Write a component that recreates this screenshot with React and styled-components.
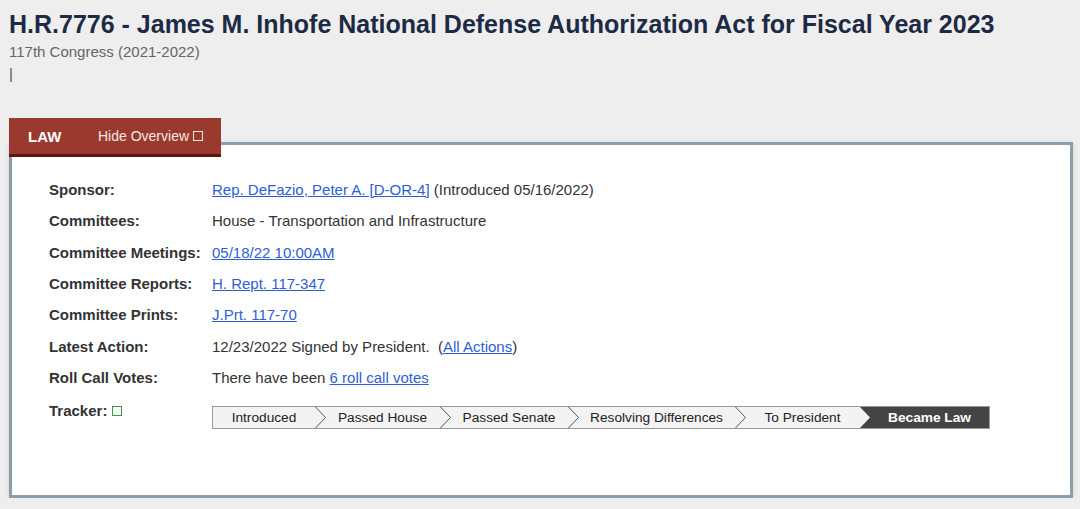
import React from "react";
import styled, { createGlobalStyle } from "styled-components";

const Global = createGlobalStyle`
  html, body { margin: 0; padding: 0; background: #eeeeee; }
  body { font-family: "Liberation Sans", Arial, Helvetica, sans-serif; color: #333; }
`;

const Page = styled.div`
  padding: 9px 8px 0 9px;
`;

const Title = styled.h1`
  margin: 0;
  font-size: 25px;
  line-height: 30px;
  font-weight: bold;
  color: #1d2a45;
`;

const Congress = styled.div`
  font-size: 15px;
  line-height: 18px;
  color: #666;
  margin-top: 4px;
`;

const Caret = styled.div`
  font-size: 15px;
  line-height: 16px;
  color: #555;
  margin-top: 5px;
`;

const Overview = styled.div`
  margin-top: 36px;
`;

const Tab = styled.div`
  position: relative;
  z-index: 2;
  display: flex;
  align-items: center;
  width: 212px;
  height: 39px;
  box-sizing: border-box;
  background: #9a3a2e;
  border-bottom: 3px solid #5c1610;
  color: #fff;
  font-size: 14px;
  margin-bottom: -15px;
`;

const TabLabel = styled.span`
  font-weight: bold;
  font-size: 15px;
  padding-left: 19px;
  width: 70px;
`;

const TabToggle = styled.span`
  display: flex;
  align-items: center;
  gap: 4px;
  color: #f4e6e3;
`;

const Square = styled.span`
  display: inline-block;
  width: 8px;
  height: 8px;
  border: 1.5px solid ${(p) => p.$color};
`;

const Panel = styled.div`
  width: 1064px;
  box-sizing: border-box;
  height: 356px;
  background: #fff;
  border: 3px solid #8d9daa;
  box-shadow: 0 1px 5px rgba(0, 0, 0, 0.12);
  padding: 29px 0 0 37px;
`;

const Grid = styled.div`
  display: grid;
  grid-template-columns: 163px 1fr;
  grid-auto-rows: 31.3px;
  align-items: center;
  font-size: 15px;
`;

const Label = styled.div`
  font-weight: bold;
  color: #333;
  display: flex;
  align-items: center;
  gap: 5px;
  align-self: ${(p) => (p.$top ? "start" : "center")};
  padding-top: ${(p) => (p.$top ? "9px" : "0")};
`;

const Value = styled.div`
  color: #333;
  align-self: ${(p) => (p.$top ? "start" : "center")};
`;

const Link = styled.a`
  color: #2d5ed6;
  text-decoration: underline;
  cursor: pointer;
`;

const Tracker = styled.div`
  display: flex;
  width: 778px;
  height: 23px;
  box-sizing: border-box;
  border: 1px solid #999;
  background: #f3f3f3;
  margin-top: 13px;
`;

const Step = styled.div`
  position: relative;
  flex: 0 0 ${(p) => p.$w}px;
  display: flex;
  align-items: center;
  justify-content: center;
  font-size: 13.7px;
  padding-left: ${(p) => (p.$first ? 0 : 10)}px;
  box-sizing: border-box;
  background: ${(p) => (p.$done ? "#444" : "transparent")};
  color: ${(p) => (p.$done ? "#fff" : "#222")};
  font-weight: ${(p) => (p.$done ? "bold" : "normal")};
  clip-path: ${(p) =>
    p.$done ? "polygon(0 0, 100% 0, 100% 100%, 0 100%, 10px 50%)" : "none"};
`;

const Chevron = styled.svg`
  position: absolute;
  left: 0;
  top: 0;
`;

const steps = [
  { t: "Introduced", w: 102 },
  { t: "Passed House", w: 125 },
  { t: "Passed Senate", w: 128 },
  { t: "Resolving Differences", w: 167 },
  { t: "To President", w: 125 },
  { t: "Became Law", w: 129, done: true },
];

export default function App() {
  return (
    <>
      <Global />
      <Page>
        <Title>H.R.7776 - James M. Inhofe National Defense Authorization Act for Fiscal Year 2023</Title>
        <Congress>117th Congress (2021-2022)</Congress>
        <Caret>|</Caret>
        <Overview>
          <Tab>
            <TabLabel>LAW</TabLabel>
            <TabToggle>
              Hide Overview <Square $color="#f4e6e3" />
            </TabToggle>
          </Tab>
          <Panel>
            <Grid>
              <Label>Sponsor:</Label>
              <Value>
                <Link>Rep. DeFazio, Peter A. [D-OR-4]</Link> (Introduced 05/16/2022)
              </Value>
              <Label>Committees:</Label>
              <Value>House - Transportation and Infrastructure</Value>
              <Label>Committee Meetings:</Label>
              <Value>
                <Link>05/18/22 10:00AM</Link>
              </Value>
              <Label>Committee Reports:</Label>
              <Value>
                <Link>H. Rept. 117-347</Link>
              </Value>
              <Label>Committee Prints:</Label>
              <Value>
                <Link>J.Prt. 117-70</Link>
              </Value>
              <Label>Latest Action:</Label>
              <Value>
                12/23/2022 Signed by President.&nbsp; (<Link>All Actions</Link>)
              </Value>
              <Label>Roll Call Votes:</Label>
              <Value>
                There have been <Link>6 roll call votes</Link>
              </Value>
              <Label $top>
                Tracker: <Square $color="#3a9a3a" />
              </Label>
              <Value $top>
                <Tracker>
                  {steps.map((s, i) => (
                    <Step key={s.t} $w={s.w} $first={i === 0} $done={s.done}>
                      {i > 0 && !s.done && (
                        <Chevron width="12" height="21" viewBox="0 0 12 21">
                          <polyline points="0.5,0 10.5,10.5 0.5,21" fill="none" stroke="#555" strokeWidth="1" />
                        </Chevron>
                      )}
                      {s.t}
                    </Step>
                  ))}
                </Tracker>
              </Value>
            </Grid>
          </Panel>
        </Overview>
      </Page>
    </>
  );
}
